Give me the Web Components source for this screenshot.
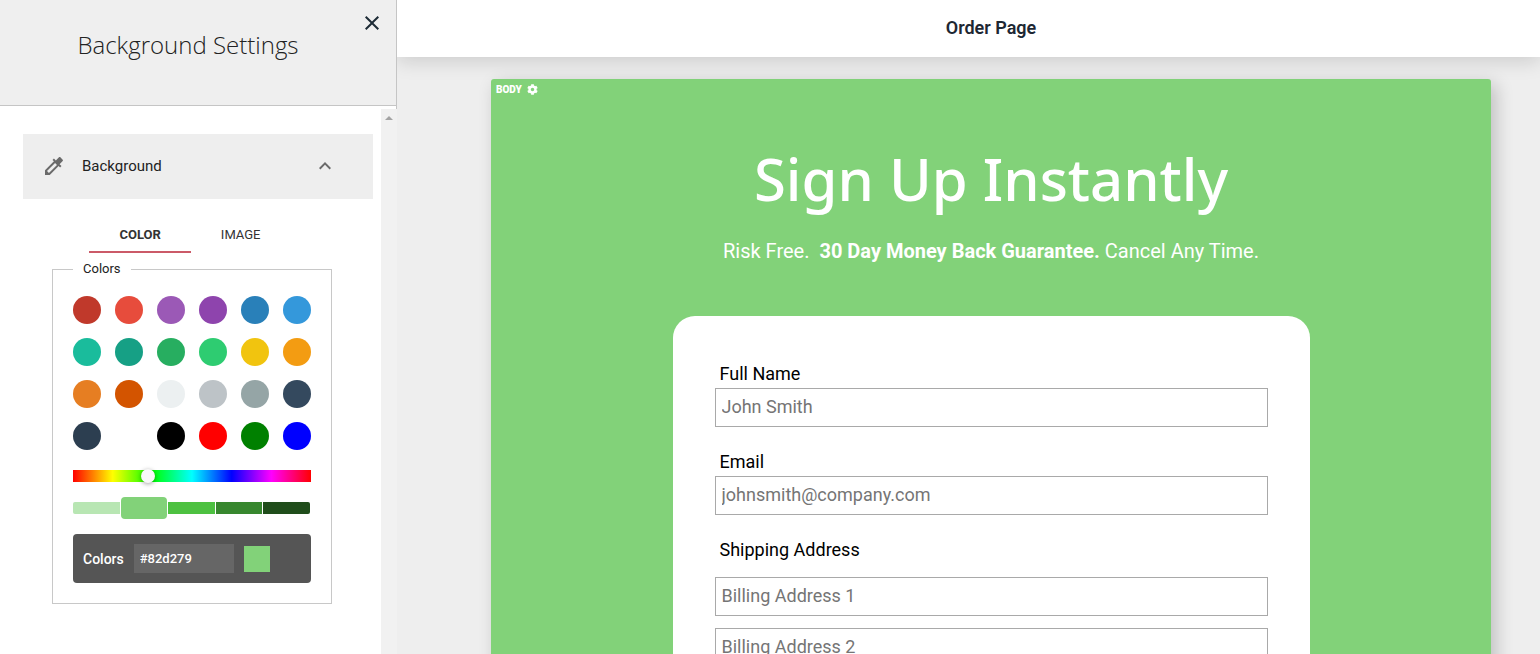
<!DOCTYPE html>
<html lang="en">
<head>
<meta charset="utf-8">
<meta name="viewport" content="width=device-width, initial-scale=1">
<title>Order Page</title>
<style>
  body {
    margin: 0;
    font-family: Roboto, "Liberation Sans", sans-serif;
    color: #222;
    --accent: #82d279;
  }
</style>
</head>
<body>
<page-builder>
  <settings-panel slot="panel" title="Background Settings">
    <settings-section label="Background">
      <tab-bar tabs="COLOR,IMAGE"></tab-bar>
      <color-picker value="#82d279"></color-picker>
    </settings-section>
  </settings-panel>
  <top-bar label="Order Page"></top-bar>
  <page-canvas>
    <page-hero title="Sign Up Instantly">
      Risk Free.&nbsp; <b>30 Day Money Back Guarantee.</b> Cancel Any Time.
    </page-hero>
    <order-form>
      <form-field label="Full Name" placeholders="John Smith"></form-field>
      <form-field label="Email" placeholders="johnsmith@company.com"></form-field>
      <form-field label="Shipping Address" placeholders="Billing Address 1|Billing Address 2"></form-field>
    </order-form>
  </page-canvas>
</page-builder>

<script>
const ICONS = {
  close: ["0 0 24 24", "M19 6.41L17.59 5 12 10.59 6.41 5 5 6.41 10.59 12 5 17.59 6.41 19 12 13.41 17.59 19 19 17.59 13.41 12z"],
  dropper: ["0 0 24 24", "M20.71 5.63l-2.34-2.34c-.39-.39-1.02-.39-1.41 0l-3.12 3.12-1.93-1.91-1.41 1.41 1.42 1.42L3 16.25V21h4.75l8.92-8.92 1.42 1.42 1.41-1.41-1.92-1.92 3.12-3.12c.4-.4.4-1.03.01-1.42zM6.92 19L5 17.08l8.06-8.06 1.92 1.92L6.92 19z"],
  up: ["0 0 24 24", "M12 8l-6 6 1.41 1.41L12 10.83l4.59 4.58L18 14z"],
  arrow: ["0 0 8 4", "M0 4L4 0l4 4z"],
  cog: ["0 0 512 512", "M487.4 315.7l-42.6-24.6c4.3-23.2 4.3-47 0-70.2l42.6-24.6c4.9-2.8 7.1-8.6 5.5-14-11.1-35.6-30-67.8-54.7-94.6-3.8-4.1-10-5.1-14.8-2.3L380.8 110c-17.9-15.4-38.5-27.3-60.8-35.1V25.8c0-5.6-3.9-10.5-9.4-11.7-36.7-8.2-74.3-7.8-109.2 0-5.5 1.2-9.4 6.1-9.4 11.7V75c-22.2 7.9-42.8 19.8-60.8 35.1L88.7 85.5c-4.9-2.8-11-1.9-14.8 2.3-24.7 26.7-43.6 58.9-54.7 94.6-1.7 5.4.6 11.2 5.5 14L67.3 221c-4.3 23.2-4.3 47 0 70.2l-42.6 24.6c-4.9 2.8-7.1 8.6-5.5 14 11.1 35.6 30 67.8 54.7 94.6 3.8 4.1 10 5.1 14.8 2.3l42.6-24.6c17.9 15.4 38.5 27.3 60.8 35.1v49.2c0 5.6 3.9 10.5 9.4 11.7 36.7 8.2 74.3 7.8 109.2 0 5.5-1.2 9.4-6.1 9.4-11.7v-49.2c22.2-7.9 42.8-19.8 60.8-35.1l42.6 24.6c4.9 2.8 11 1.9 14.8-2.3 24.7-26.7 43.6-58.9 54.7-94.6 1.5-5.5-.7-11.3-5.6-14.1zM256 336c-44.1 0-80-35.9-80-80s35.9-80 80-80 80 35.9 80 80-35.9 80-80 80z"],
};

function icon(name, width, height = width) {
  const [box, path] = ICONS[name];
  return `<svg viewBox="${box}" width="${width}" height="${height}" fill="currentColor" aria-hidden="true"><path d="${path}"/></svg>`;
}

// Shared by every element: opens the shadow root and draws once
class BaseElement extends HTMLElement {
  constructor() {
    super();
    this.attachShadow({ mode: "open" });
  }

  connectedCallback() {
    this.shadowRoot.innerHTML = `
      <style>
        *, *::before, *::after { box-sizing: border-box; }
        :host { display: block; box-sizing: border-box; }
        button {
          margin: 0;
          padding: 0;
          border: 0;
          background: none;
          color: inherit;
          font: inherit;
          cursor: pointer;
        }
        svg { display: block; }
      </style>
      ${this.render()}`;
  }
}

class PageBuilder extends BaseElement {
  render() {
    return `
      <style>
        :host {
          display: grid;
          grid-template-columns: 397px minmax(0, 1fr);
          height: 100vh;
        }
        main {
          display: flex;
          flex-direction: column;
          min-width: 0;
          min-height: 0;
          background: #eee;
          overflow: hidden;
        }
      </style>
      <slot name="panel"></slot>
      <main><slot></slot></main>
    `;
  }
}

class SettingsPanel extends BaseElement {
  render() {
    return `
      <style>
        :host {
          display: flex;
          flex-direction: column;
          min-height: 0;
          background: #fff;
        }
        .top {
          height: 109px;
          flex: none;
          border-right: 1px solid #c5c5c5;
        }
        header {
          display: flex;
          align-items: flex-start;
          height: 106px;
          padding: 11px 12px 0 16px;
          background: #efefef;
          border-bottom: 1px solid #c5c5c5;
        }
        h2 {
          flex: 1;
          margin: 16px 0 0;
          font: 300 24px/36px "Open Sans", sans-serif;
          text-align: center;
        }
        .close { color: #1d2b36; }
        .scroll {
          flex: 1;
          display: flex;
          min-height: 0;
        }
        .content {
          flex: 1;
          padding: 25px 8px 0 23px;
          overflow: hidden;
        }
        .track {
          display: flex;
          justify-content: center;
          width: 16px;
          padding-top: 7px;
          background: #f1f1f1;
          color: #a3a3a3;
        }
      </style>
      <div class="top">
        <header>
          <h2>${this.getAttribute("title")}</h2>
          <button class="close" aria-label="Close">${icon("close", 24)}</button>
        </header>
      </div>
      <div class="scroll">
        <div class="content"><slot></slot></div>
        <div class="track">${icon("arrow", 8, 4)}</div>
      </div>
    `;
  }
}

class SettingsSection extends BaseElement {
  render() {
    return `
      <style>
        .head {
          display: flex;
          align-items: center;
          gap: 16px;
          width: 100%;
          height: 65px;
          padding: 0 36px 2px 19px;
          background: #eee;
          font-size: 15px;
          text-align: left;
        }
        .head span { flex: 1; }
        .head svg { color: #6a6a6a; }
        .body { padding: 20px 41px 20px 29px; }
      </style>
      <button class="head" aria-expanded="true">
        ${icon("dropper", 24)}
        <span>${this.getAttribute("label")}</span>
        ${icon("up", 24)}
      </button>
      <div class="body"><slot></slot></div>
    `;
  }
}

class TabBar extends BaseElement {
  render() {
    const tabs = this.getAttribute("tabs").split(",");
    return `
      <style>
        :host {
          display: flex;
          justify-content: center;
          padding-right: 4px;
        }
        button {
          height: 34px;
          padding: 0 30px 2px;
          font-size: 13px;
          color: #333;
          border-bottom: 2px solid transparent;
        }
        button[aria-selected="true"] {
          font-weight: 700;
          border-color: #cb5a68;
        }
      </style>
      ${tabs.map((tab, i) => `<button role="tab" aria-selected="${i === 0}">${tab}</button>`).join("")}
    `;
  }
}

class ColorPicker extends BaseElement {
  render() {
    const value = this.getAttribute("value");
    const swatches = [
      "#c0392b", "#e74c3c", "#9b59b6", "#8e44ad", "#2980b9", "#3498db",
      "#1abc9c", "#16a085", "#27ae60", "#2ecc71", "#f1c40f", "#f39c12",
      "#e67e22", "#d35400", "#ecf0f1", "#bdc3c7", "#95a5a6", "#34495e",
      "#2c3e50", "#ffffff", "#000000", "#ff0000", "#008000", "#0000ff",
    ];
    const shades = ["#b8e6b3", value, "#4dc141", "#37872e", "#204d1b"];
    return `
      <style>
        :host { margin-top: 8px; }
        fieldset {
          margin: 0;
          padding: 19px 20px 20px;
          border: 1px solid #c8c8c8;
        }
        legend {
          padding: 0 10px;
          font-size: 13px;
          line-height: 16px;
        }
        .swatches {
          display: grid;
          grid-template-columns: repeat(6, 28px);
          justify-content: space-between;
          row-gap: 14px;
        }
        .swatches button {
          height: 28px;
          border-radius: 50%;
        }
        .hue {
          display: block;
          appearance: none;
          width: 100%;
          height: 12px;
          margin: 20px 0;
          background: linear-gradient(to right, #f00, #ff0, #0f0, #0ff, #00f, #f0f, #f00);
        }
        .hue::-webkit-slider-thumb {
          appearance: none;
          width: 14px;
          height: 14px;
          border-radius: 50%;
          background: #f8f8f8;
          box-shadow: 0 1px 4px rgba(0, 0, 0, 0.37);
        }
        .shades {
          display: grid;
          grid-template: 12px / repeat(5, 1fr);
          align-items: center;
          gap: 1px;
          padding-right: 1px;
        }
        .shades button { height: 12px; }
        .shades button:first-child { border-radius: 2px 0 0 2px; }
        .shades button:last-child { border-radius: 0 2px 2px 0; }
        .shades button.active {
          height: 22px;
          border-radius: 4px;
        }
        .hex {
          display: flex;
          align-items: center;
          gap: 10px;
          height: 49px;
          margin-top: 20px;
          padding: 0 10px;
          border-radius: 4px;
          background: #555;
          color: #fff;
          font-size: 14px;
          font-weight: 500;
        }
        .hex input {
          width: 100px;
          height: 29px;
          padding: 0 6px;
          border: 0;
          background: #666;
          color: #fff;
          font: 500 13px Roboto, sans-serif;
        }
        .preview {
          width: 26px;
          height: 26px;
          background: ${value};
        }
      </style>
      <fieldset>
        <legend>Colors</legend>
        <div class="swatches">
          ${swatches.map((c) => `<button style="background:${c}" aria-label="${c}"></button>`).join("")}
        </div>
        <input class="hue" type="range" min="0" max="360" value="109" aria-label="Hue">
        <div class="shades">
          ${shades.map((c) => `<button class="${c === value ? "active" : ""}" style="background:${c}" aria-label="${c}"></button>`).join("")}
        </div>
        <div class="hex">
          <label for="hex">Colors</label>
          <input id="hex" type="text" value="${value}">
          <span class="preview"></span>
        </div>
      </fieldset>
    `;
  }
}

class TopBar extends BaseElement {
  render() {
    return `
      <style>
        :host {
          position: relative;
          z-index: 1;
          flex: none;
          padding: 16px 49px 17px 94px;
          background: #fff;
          box-shadow: 0 4px 20px rgba(0, 0, 0, 0.15);
          text-align: center;
        }
        h1 {
          margin: 0;
          font-size: 18px;
          line-height: 24px;
          font-weight: 600;
          color: #1d2733;
        }
      </style>
      <h1>${this.getAttribute("label")}</h1>
    `;
  }
}

class PageCanvas extends BaseElement {
  render() {
    return `
      <style>
        :host {
          flex: 1;
          min-height: 0;
          padding: 22px 49px 0 94px;
          overflow-y: auto;
          scrollbar-width: none;
        }
        .page {
          min-height: 100%;
          padding-bottom: 60px;
          border-radius: 3px 3px 0 0;
          background: var(--accent);
          box-shadow: 5px 5px 18px rgba(0, 0, 0, 0.2);
          color: #fff;
        }
        .tag {
          display: flex;
          align-items: center;
          gap: 5px;
          height: 20px;
          padding: 0 5px;
          font-size: 10px;
          font-weight: 900;
        }
      </style>
      <div class="page">
        <button class="tag">BODY ${icon("cog", 11)}</button>
        <slot></slot>
      </div>
    `;
  }
}

class PageHero extends BaseElement {
  render() {
    return `
      <style>
        :host {
          padding: 42px 20px 51px;
          text-align: center;
        }
        h2 {
          margin: 0 0 20px;
          font: 500 58px/76px "Noto Sans", sans-serif;
        }
        p {
          margin: 0;
          font-size: 20px;
          line-height: 28px;
        }
      </style>
      <h2>${this.getAttribute("title")}</h2>
      <p><slot></slot></p>
    `;
  }
}

class OrderForm extends BaseElement {
  render() {
    return `
      <style>
        :host {
          max-width: 637px;
          margin: 0 auto;
          padding: 47px 42px;
          border-radius: 22px;
          background: #fff;
          color: #000;
        }
        form {
          display: grid;
          gap: 24px;
        }
      </style>
      <form><slot></slot></form>
    `;
  }
}

class FormField extends BaseElement {
  render() {
    const label = this.getAttribute("label");
    const placeholders = this.getAttribute("placeholders").split("|");
    const gap = placeholders.length > 1 ? 16 : 3;
    return `
      <style>
        label {
          display: block;
          margin-bottom: ${gap}px;
          padding-left: 5px;
          font-size: 18px;
          line-height: 22px;
        }
        .inputs {
          display: grid;
          gap: 12px;
        }
        input {
          width: 100%;
          height: 39px;
          padding: 0 6px 2px;
          border: 1px solid #a9a9a9;
          background: #fff;
          font: 18px Roboto, sans-serif;
        }
        input::placeholder { color: #757575; }
      </style>
      <label for="field-0">${label}</label>
      <div class="inputs">
        ${placeholders.map((text, i) => `<input id="field-${i}" type="text" placeholder="${text}" ${i ? `aria-label="${text}"` : ""}>`).join("")}
      </div>
    `;
  }
}

// Register custom elements
customElements.define("page-builder", PageBuilder);
customElements.define("settings-panel", SettingsPanel);
customElements.define("settings-section", SettingsSection);
customElements.define("tab-bar", TabBar);
customElements.define("color-picker", ColorPicker);
customElements.define("top-bar", TopBar);
customElements.define("page-canvas", PageCanvas);
customElements.define("page-hero", PageHero);
customElements.define("order-form", OrderForm);
customElements.define("form-field", FormField);
</script>
</body>
</html>
